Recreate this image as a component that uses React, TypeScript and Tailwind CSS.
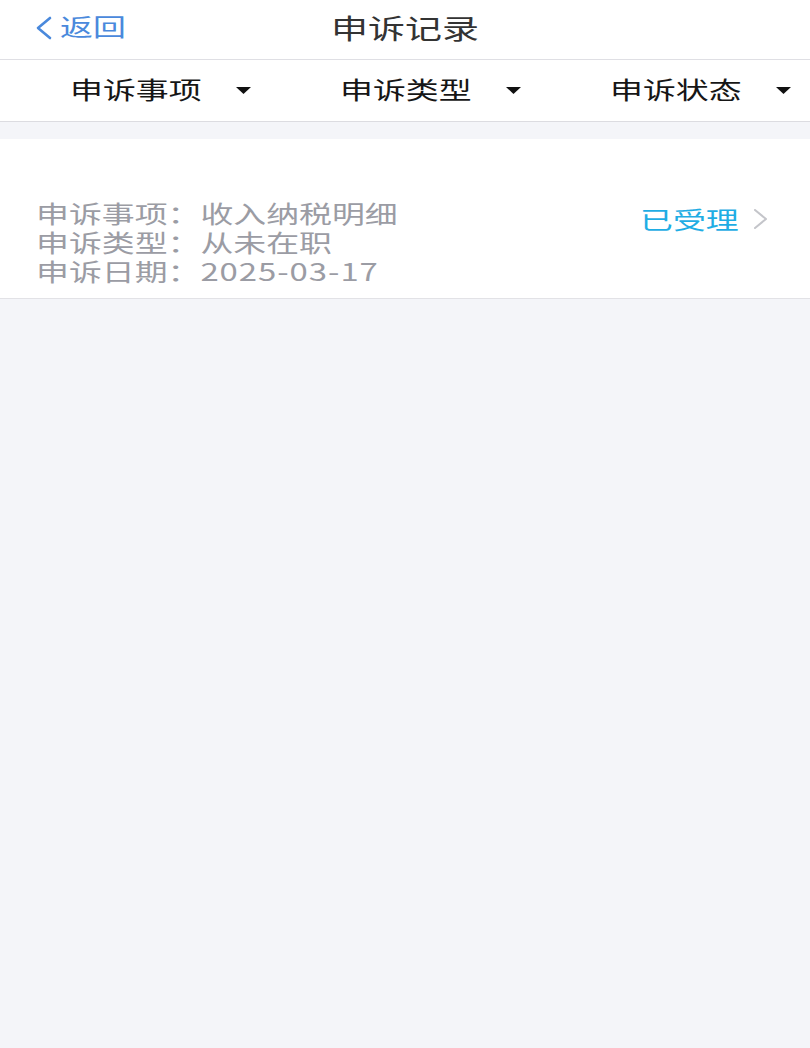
import type { ReactNode } from "react";

const FONT = { fontFamily: '"Noto Sans CJK SC", "Noto Sans", sans-serif' };

// the screen is stretched sideways, so text is widened with scale-x
const Wide = ({ children, className = "" }: { children: ReactNode; className?: string }) => (
  <span className={"inline-block origin-left scale-x-[1.37] whitespace-nowrap " + className}>{children}</span>
);

const Caret = () => (
  <svg width="15" height="7" viewBox="0 0 15 7" className="shrink-0">
    <path d="M0 0h15L7.5 7z" fill="#111" />
  </svg>
);

const FilterItem = ({ label }: { label: string }) => (
  <div className="flex flex-1 items-center pl-[70px]">
    <div className="w-[166px]">
      <Wide className="text-[24px] leading-none text-[#161616]">{label}</Wide>
    </div>
    <Caret />
  </div>
);

export default function App() {
  return (
    <div className="min-h-[1048px] w-full bg-[#f4f5f9]" style={FONT}>
      <header className="grid h-[60px] grid-cols-[1fr_auto_1fr] items-center border-b border-[#dfdfe4] bg-white pb-[4px]">
        <div className="flex items-center pl-[35px]">
          <svg width="18" height="24" viewBox="0 0 18 24" fill="none">
            <path d="M15 2L3 12l12 10" stroke="#4a89dc" strokeWidth="2.6" strokeLinecap="round" strokeLinejoin="round" />
          </svg>
          <div className="ml-[7px]">
            <Wide className="text-[24px] leading-none text-[#4a89dc]">返回</Wide>
          </div>
        </div>
        <span className="inline-block origin-center scale-x-[1.37] text-[27px] leading-none text-[#333333]">申诉记录</span>
        <div />
      </header>

      <nav className="flex h-[62px] items-center border-b border-[#dcdce1] bg-white">
        <FilterItem label="申诉事项" />
        <FilterItem label="申诉类型" />
        <FilterItem label="申诉状态" />
      </nav>

      <section className="mt-[17px] flex items-start justify-between border-b border-[#e2e2e6] bg-white pb-[13px] pl-[36px] pr-[42px] pt-[59px]">
        <div className="flex flex-col text-[24px] leading-[29px] text-[#9b9ca4]">
          <Wide>申诉事项：收入纳税明细</Wide>
          <Wide>申诉类型：从未在职</Wide>
          <Wide>
            申诉日期：<span className="tracking-[0.7px]">2025-03-17</span>
          </Wide>
        </div>
        <div className="mt-[6px] flex items-center">
          <div className="w-[113px]">
            <Wide className="text-[24px] leading-[29px] text-[#1fade4]">已受理</Wide>
          </div>
          <svg width="15" height="20" viewBox="0 0 15 20" fill="none">
            <path d="M2 1l11 9-11 9" stroke="#c4c5ca" strokeWidth="2" strokeLinecap="round" strokeLinejoin="round" />
          </svg>
        </div>
      </section>
    </div>
  );
}
